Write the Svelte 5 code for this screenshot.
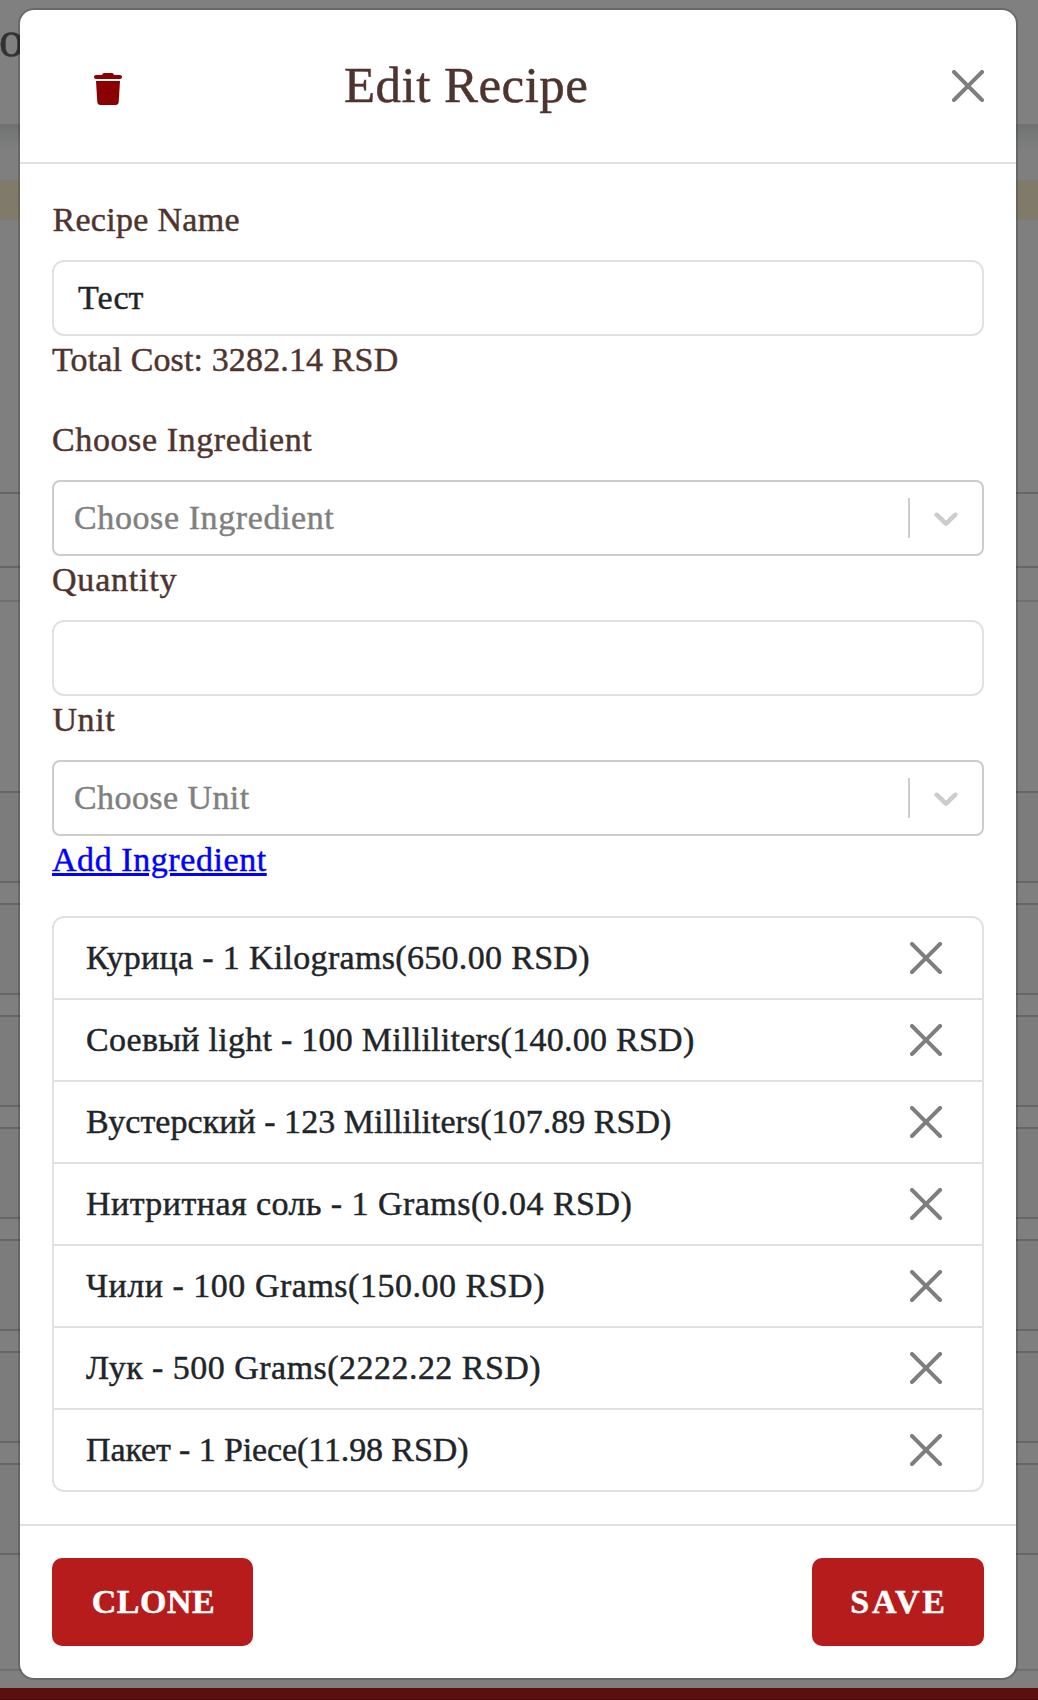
<script>
  const ingredients = [
    { text: 'Курица - 1 Kilograms(650.00 RSD)', tracking: 0.316 },
    { text: 'Соевый light - 100 Milliliters(140.00 RSD)', tracking: 0.256 },
    { text: 'Вустерский - 123 Milliliters(107.89 RSD)', tracking: 0.04 },
    { text: 'Нитритная соль - 1 Grams(0.04 RSD)', tracking: 0.45 },
    { text: 'Чили - 100 Grams(150.00 RSD)', tracking: 0.51 },
    { text: 'Лук - 500 Grams(2222.22 RSD)', tracking: 0.47 },
    { text: 'Пакет - 1 Piece(11.98 RSD)', tracking: -0.11 }
  ];
  const cards = Array(7).fill(0);
</script>

{#snippet cross()}
  <svg class="cross" viewBox="0 0 16 16" aria-hidden="true">
    <path d="M.293.293a1 1 0 0 1 1.414 0L8 6.586 14.293.293a1 1 0 1 1 1.414 1.414L9.414 8l6.293 6.293a1 1 0 0 1-1.414 1.414L8 9.414l-6.293 6.293a1 1 0 0 1-1.414-1.414L6.586 8 .293 1.707a1 1 0 0 1 0-1.414z" />
  </svg>
{/snippet}

{#snippet select(label, kind)}
  <div class="select">
    <span class={kind}>{label}</span>
    <i class="separator"></i>
    <svg class="chevron" viewBox="0 0 20 20" aria-hidden="true">
      <path d="M4.516 7.548c0.436-0.446 1.043-0.481 1.576 0l3.908 3.747 3.908-3.747c0.533-0.481 1.141-0.446 1.574 0 0.436 0.445 0.408 1.197 0 1.615-0.406 0.418-4.695 4.502-4.695 4.502-0.217 0.223-0.502 0.335-0.787 0.335s-0.57-0.112-0.789-0.335c0 0-4.287-4.084-4.695-4.502s-0.436-1.17 0-1.615z" />
    </svg>
  </div>
{/snippet}

<div class="page">
  <div class="topbar">o</div>
  <div class="shade"></div>
  <div class="band"></div>
  <div class="field"></div>
  <div class="section">
    {#each cards as _}<div class="card"></div>{/each}
  </div>
  <div class="bottombar"></div>

  <div class="modal" role="dialog" aria-label="Edit Recipe">
    <header>
      <svg class="trash" viewBox="0 0 448 512" aria-hidden="true">
        <path d="M135.2 17.7L128 32H32C14.3 32 0 46.3 0 64S14.3 96 32 96H416c17.7 0 32-14.3 32-32s-14.3-32-32-32H320l-7.2-14.3C307.4 6.8 296.3 0 284.2 0H163.8c-12.1 0-23.2 6.8-28.6 17.7zM416 128H32L53.2 467c1.6 25.3 22.6 45 47.9 45H346.9c25.3 0 46.3-19.7 47.9-45L416 128z" />
      </svg>
      <h1>Edit Recipe</h1>
      {@render cross()}
    </header>

    <main>
      <div class="label name">Recipe Name</div>
      <div class="input"><span>Тест</span></div>
      <div class="total">Total Cost: 3282.14 RSD</div>
      <div class="label choose">Choose Ingredient</div>
      {@render select('Choose Ingredient', 'choose')}
      <div class="label quantity">Quantity</div>
      <div class="input"></div>
      <div class="label unit">Unit</div>
      {@render select('Choose Unit', 'choose-unit')}
      <div class="add"><span>Add Ingredient</span></div>
      <ul>
        {#each ingredients as item}
          <li>
            <span style="letter-spacing: {item.tracking}px">{item.text}</span>
            {@render cross()}
          </li>
        {/each}
      </ul>
    </main>

    <footer>
      <button class="clone">CLONE</button>
      <button class="save">SAVE</button>
    </footer>
  </div>
</div>

<style>
  :global(body) { margin: 0; background: #808080; }
  * { box-sizing: border-box; }
  .page {
    position: relative;
    width: 1038px;
    height: 1700px;
    overflow: hidden;
    display: flex;
    flex-direction: column;
    background: #7f7f7f;
    font: 34px/48px Georgia, "Liberation Serif", serif;
    color: #212529;
    -webkit-text-stroke: 0.45px currentColor;
  }
  .topbar { height: 124px; padding-top: 11px; font-size: 50px; line-height: 56px; text-indent: -1px; background: #808080; color: #333; }
  .shade { height: 24px; background: linear-gradient(#6f7070, #787a7a 55%, #7e7e7f); }
  .band { height: 40px; margin-top: 32px; background: #807a6b; }
  .field { height: 76px; margin-top: 272px; border: solid #666; border-width: 2px 0; }
  .section {
    height: 1071px;
    margin-top: 32px;
    padding-top: 189px;
    display: flex;
    flex-direction: column;
    gap: 20px;
    border: solid #707070;
    border-width: 2px 0;
  }
  .card { height: 92px; flex: none; border: solid #666; border-width: 2px 0; background: #7c7c7c; }
  .bottombar { height: 12px; margin-top: 17px; background: #5b0f0f; border-bottom: 1px solid #490c0c; }

  .modal {
    position: absolute;
    inset: 8px 20px 20px 18px;
    display: flex;
    flex-direction: column;
    background: #fff;
    background-clip: padding-box;
    border: 2px solid rgba(0, 0, 0, 0.175);
    border-radius: 16px;
  }
  header {
    height: 154px;
    flex: none;
    display: flex;
    align-items: center;
    padding: 0 32px 0 74px;
    border-bottom: 2px solid #dee2e6;
    color: #4e342e;
  }
  .trash { width: 28px; height: 32px; margin-top: 6px; fill: #8b0000; }
  h1 { margin: 0 auto 2px 222px; font-weight: 400; font-size: 51px; line-height: 72px; letter-spacing: 0.45px; }
  .cross { width: 32px; height: 32px; flex: none; fill: #000; opacity: 0.5; }

  main { padding: 32px; }
  .label { margin-bottom: 16px; color: #4e342e; }
  .name { letter-spacing: 0.3px; text-indent: 0.5px; }
  .total { margin-bottom: 32px; letter-spacing: 0.13px; color: #4e342e; }
  .choose { letter-spacing: 0.6px; }
  .choose-unit { letter-spacing: 0.42px; }
  .quantity { letter-spacing: 0.79px; }
  .unit { letter-spacing: 0.57px; text-indent: 0.5px; }
  .input { height: 76px; padding: 12px 24px; border: 2px solid #dee2e6; border-radius: 12px; }
  .select {
    height: 76px;
    display: flex;
    align-items: center;
    padding: 0 16px 0 20px;
    border: 2px solid #ccc;
    border-radius: 8px;
    color: gray;
  }
  .separator { width: 2px; height: 40px; margin: 0 16px 0 auto; background: #ccc; }
  .chevron { width: 40px; height: 40px; fill: #ccc; }
  .add { margin-bottom: 32px; letter-spacing: 0.57px; color: #00f; }
  .add span { text-decoration: underline; text-decoration-thickness: 3px; text-underline-offset: 2px; }

  ul { margin: 0; padding: 0; list-style: none; border: 2px solid #dee2e6; border-radius: 12px; }
  li { height: 82px; display: flex; align-items: center; justify-content: space-between; padding: 0 40px 0 32px; border-bottom: 2px solid #dee2e6; white-space: nowrap; }
  li:last-child { height: 80px; border-bottom: 0; }

  footer { flex: 1; display: flex; justify-content: space-between; align-items: flex-start; padding: 32px; border-top: 2px solid #dee2e6; }
  button {
    height: 88px;
    padding: 0;
    border: 0;
    border-radius: 10px;
    background: #b71c1c;
    color: #fff;
    font: 700 34px/48px Georgia, "Liberation Serif", serif;
    -webkit-text-stroke: 0.45px currentColor;
  }
  .clone { width: 201px; letter-spacing: 0.5px; text-indent: 2px; }
  .save { width: 172px; letter-spacing: 2.8px; text-indent: 2px; }
</style>
